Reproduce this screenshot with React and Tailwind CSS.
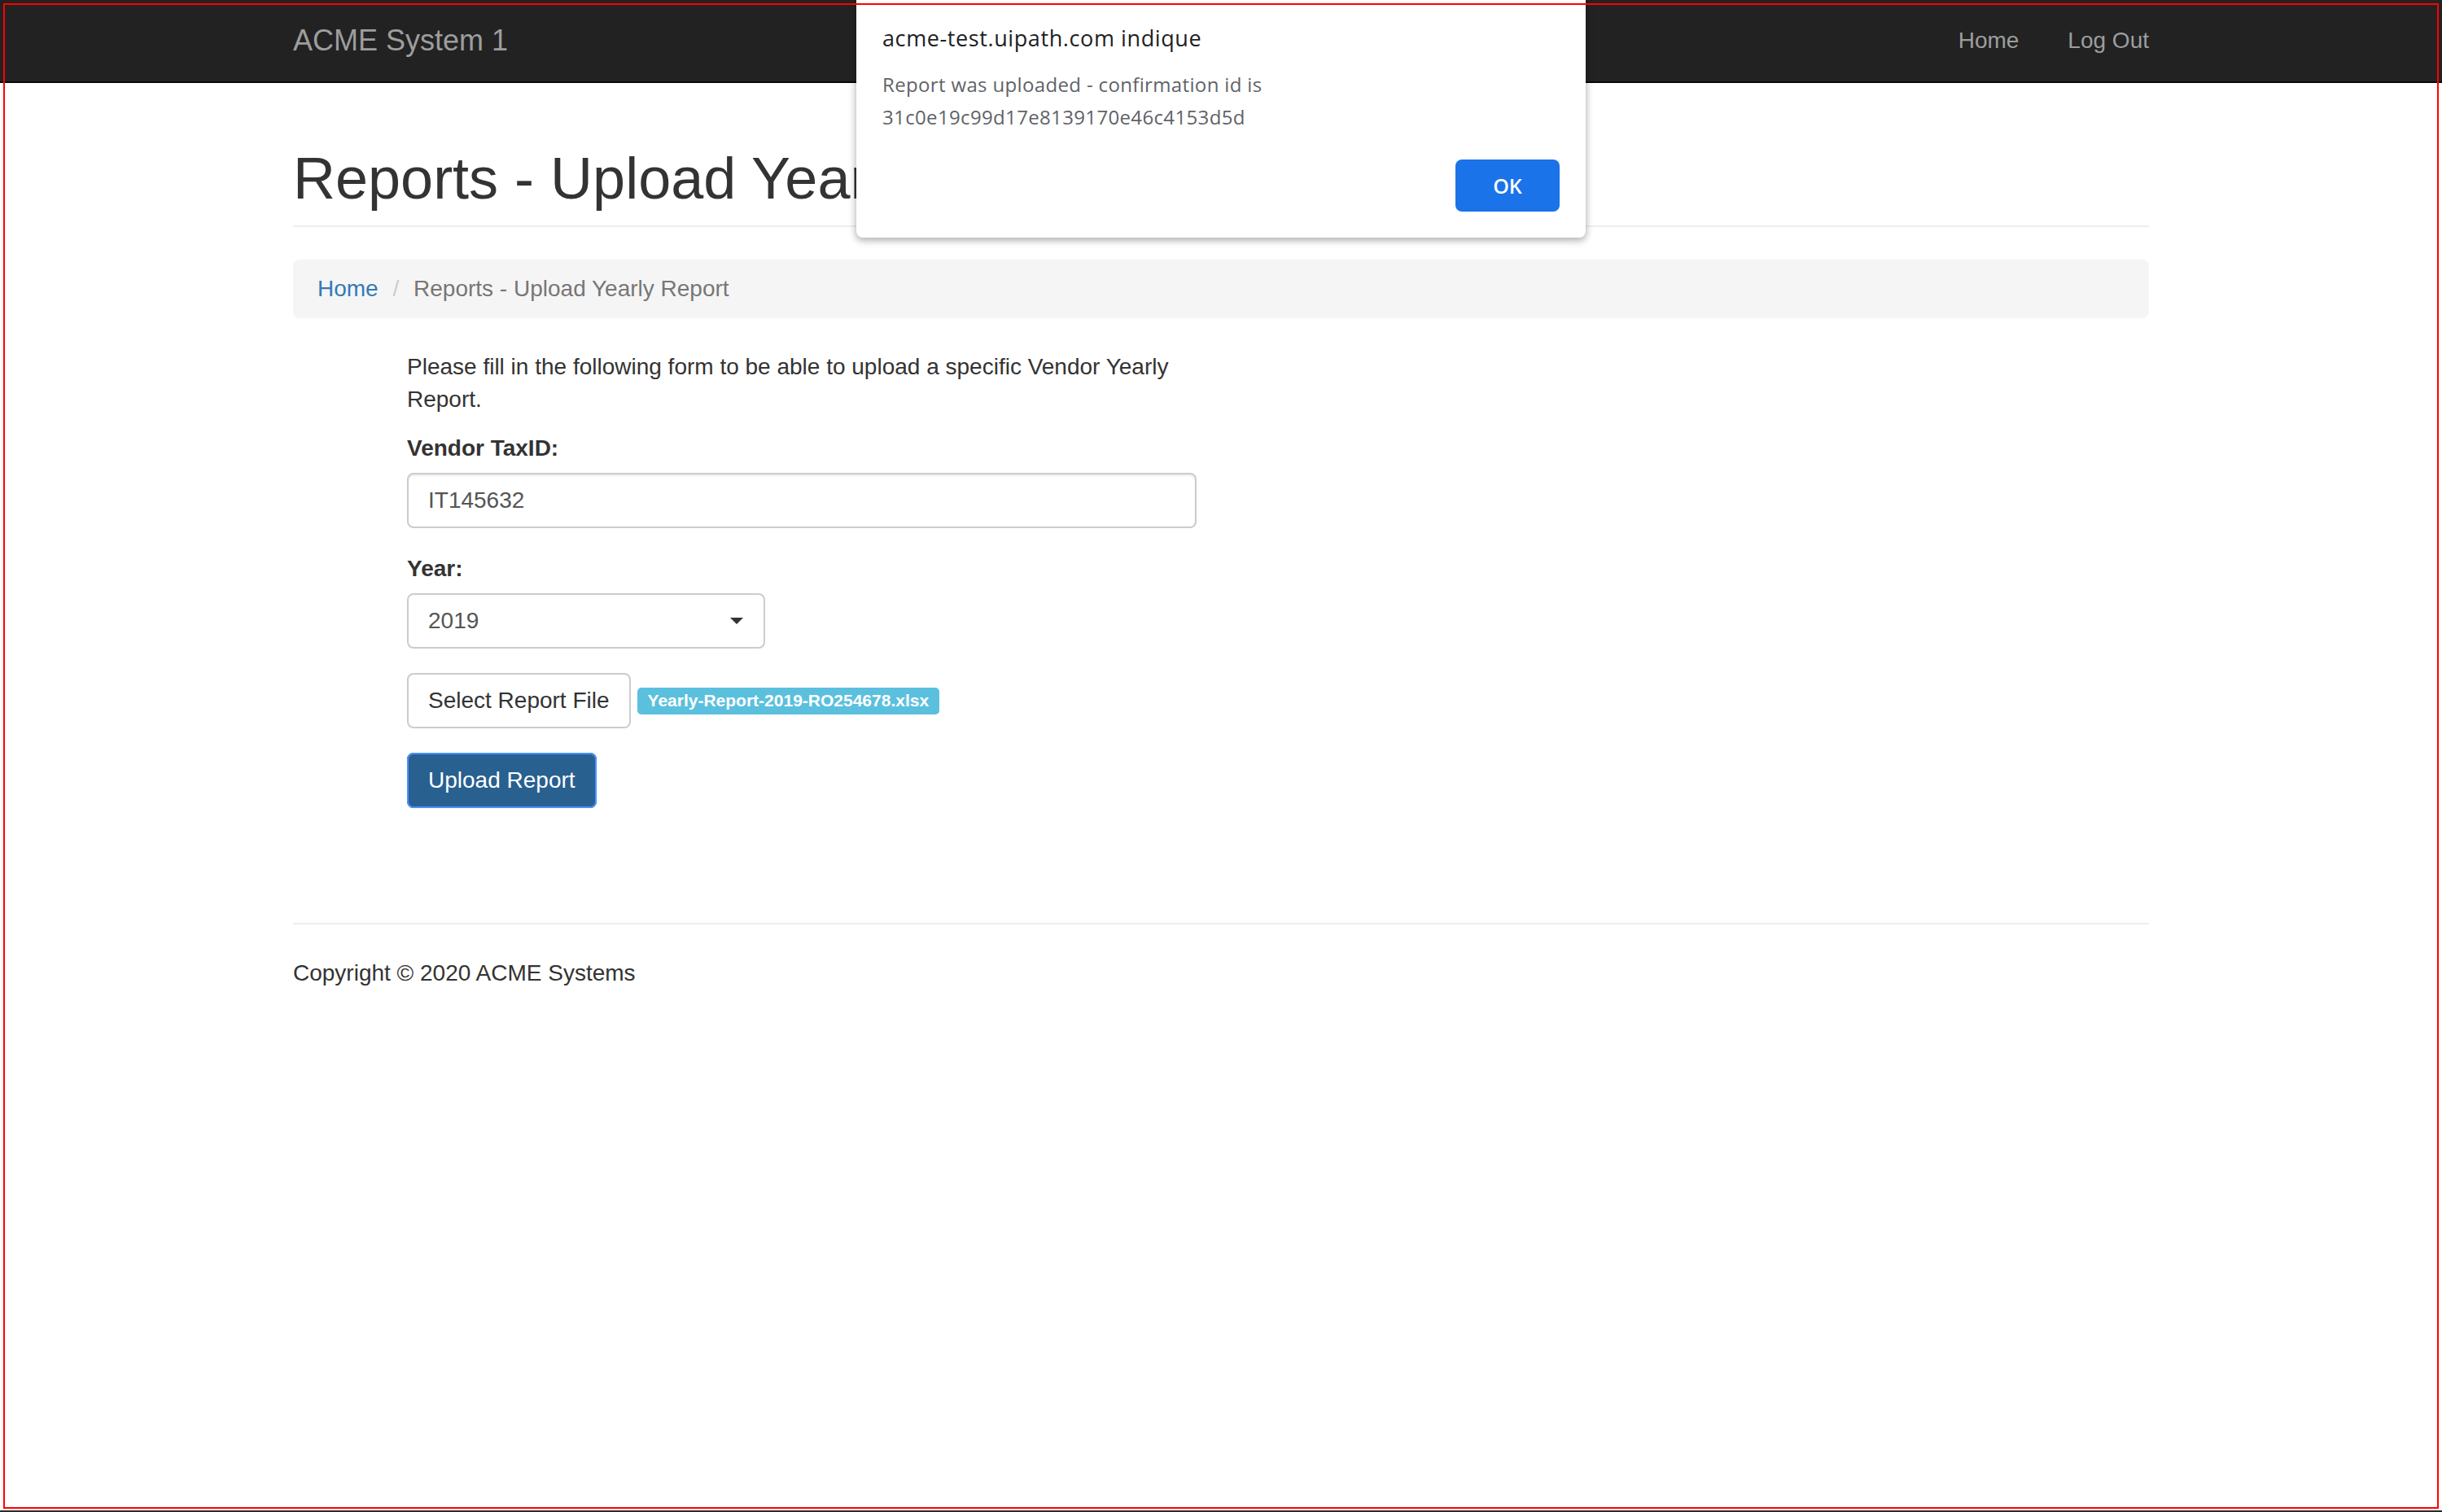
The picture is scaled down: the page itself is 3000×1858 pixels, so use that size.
import React from "react"

const NavBar = () => (
  <nav className="h-[102px] shrink-0 bg-[#222] border-b-2 border-[#080808]">
    <div className="mx-auto w-[2280px] h-full flex items-start justify-between">
      <a className="pt-[30px] text-[36px] leading-[40px] text-[#9d9d9d]">ACME System 1</a>
      <ul className="flex -mr-[30px]">
        <li>
          <a className="block px-[30px] py-[30px] text-[28px] leading-[40px] text-[#9d9d9d]">Home</a>
        </li>
        <li>
          <a className="block px-[30px] py-[30px] text-[28px] leading-[40px] text-[#9d9d9d]">Log Out</a>
        </li>
      </ul>
    </div>
  </nav>
)

const AlertDialog = () => (
  <div className="absolute top-0 left-[1052px] w-[896px] bg-white rounded-b-[8px] shadow-[0_3px_8px_1px_rgba(0,0,0,0.3)] pt-[29px] px-[32px] pb-[32px] font-['Open_Sans','Noto_Sans',sans-serif]">
    <div className="text-[27px] leading-[36px] tracking-[0.6px] text-[#202124]">acme-test.uipath.com indique</div>
    <div className="mt-[19px] text-[24px] leading-[40px] tracking-[0.35px] text-[#5f6368]">
      <div>Report was uploaded - confirmation id is</div>
      <div>31c0e19c99d17e8139170e46c4153d5d</div>
    </div>
    <div className="mt-[32px] flex justify-end">
      <button className="w-[128px] h-[64px] rounded-[8px] bg-[#1a73e8] text-white text-[25px] font-semibold">
        OK
      </button>
    </div>
  </div>
)

const UploadForm = () => (
  <div className="ml-[140px] w-[970px]">
    <p className="mb-[20px]">
      Please fill in the following form to be able to upload a specific Vendor Yearly Report.
    </p>

    <div className="mb-[30px]">
      <label className="block mb-[10px] font-bold">Vendor TaxID:</label>
      <div className="h-[68px] w-full border-2 border-[#ccc] rounded-[8px] shadow-[inset_0_2px_2px_rgba(0,0,0,0.075)] px-[24px] flex items-center text-[#555]">
        IT145632
      </div>
    </div>

    <div className="mb-[30px]">
      <label className="block mb-[10px] font-bold">Year:</label>
      <div className="h-[68px] w-[440px] border-2 border-[#ccc] rounded-[8px] bg-white px-[24px] flex items-center justify-between text-[#555]">
        <span>2019</span>
        <svg width="16" height="8" viewBox="0 0 16 8" className="mr-[1px]">
          <path d="M0 0 L16 0 L8 8 Z" fill="#333" />
        </svg>
      </div>
    </div>

    <div className="mb-[30px] flex items-center gap-[8px]">
      <button className="h-[68px] px-[24px] border-2 border-[#ccc] rounded-[8px] bg-white text-[#333]">
        Select Report File
      </button>
      <span className="inline-block px-[13px] pt-[5px] pb-[7px] rounded-[5px] bg-[#5bc0de] text-white text-[21px] leading-[21px] font-bold">
        Yearly-Report-2019-RO254678.xlsx
      </span>
    </div>

    <button className="h-[68px] px-[24px] border-2 border-[#204d74] rounded-[8px] bg-[#286090] text-white outline-2 outline-[#4d90fe] -outline-offset-2">
      Upload Report
    </button>
  </div>
)

export default function App() {
  return (
    <div className="relative w-full h-[1858px] overflow-hidden bg-white flex flex-col font-['Liberation_Sans',Arial,sans-serif] text-[28px] leading-[40px] text-[#333]">
      <NavBar />

      <main className="flex-1">
        <div className="mx-auto w-[2280px]">
          <h1 className="mt-[78px] pb-[18px] border-b-2 border-[#eee] text-[72px] leading-[79px] font-normal">
            Reports - Upload Yearly Report
          </h1>

          <div className="mt-[40px] mb-[40px] bg-[#f5f5f5] rounded-[8px] px-[30px] py-[16px]">
            <a className="text-[#337ab7]">Home</a>{" "}
            <span className="px-[10px] text-[#ccc]">/{"\u00a0"}</span>
            <span className="text-[#777]">Reports - Upload Yearly Report</span>
          </div>

          <UploadForm />

          <hr className="mt-[141px] border-0 border-t-2 border-[#eee]" />
          <footer className="mt-[40px]">
            <p>Copyright © 2020 ACME Systems</p>
          </footer>
        </div>
      </main>

      <div className="h-[2px] shrink-0 bg-[#2a2a2a]" />

      <AlertDialog />

      {/* red highlight frame drawn over the page */}
      <div className="absolute left-[4px] top-[4px] w-[2992px] h-[1850px] border-2 border-[#ff0000] pointer-events-none" />
    </div>
  )
}
